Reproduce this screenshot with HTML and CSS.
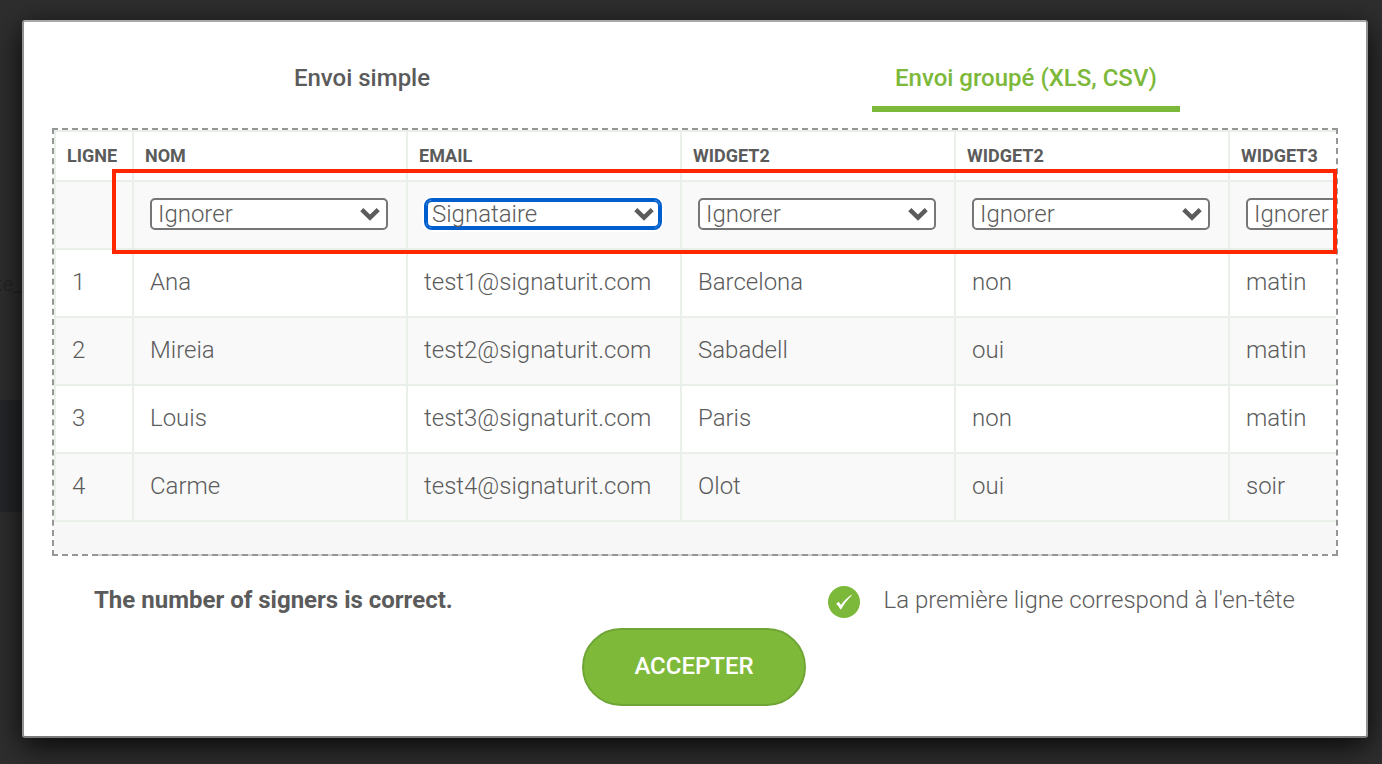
FILE: index.html
```html
<!DOCTYPE html>
<html lang="fr">
<head>
<meta charset="utf-8">
<meta name="viewport" content="width=device-width, initial-scale=1">
<title>Envoi groupé</title>
<link rel="stylesheet" href="styles.css">
</head>
<body>
<div class="page-behind" aria-hidden="true">
  <span class="page-text">te_</span>
  <div class="page-band"></div>
</div>
<svg class="symbols" aria-hidden="true">
  <symbol id="chevron" viewBox="0 0 20 14"><path d="M1.8 2.6 10 10.6 18.2 2.6" fill="none" stroke="#5b5b5b" stroke-width="4.4"/></symbol>
</svg>
<main class="modal" role="dialog" aria-label="Envoi groupé">
  <div class="tabs" role="tablist">
    <button class="tab" role="tab" aria-selected="false">Envoi simple</button>
    <button class="tab tab-active" role="tab" aria-selected="true">Envoi groupé (XLS, CSV)</button>
  </div>
  <section class="preview">
    <div class="scroller">
      <table class="sheet">
        <colgroup><col class="col-line"><col class="col-data"><col class="col-data"><col class="col-data"><col class="col-data"><col class="col-data"></colgroup>
        <thead>
          <tr><th scope="col">LIGNE</th><th scope="col">NOM</th><th scope="col">EMAIL</th><th scope="col">WIDGET2</th><th scope="col">WIDGET2</th><th scope="col">WIDGET3</th></tr>
        </thead>
        <tbody>
          <tr>
            <td></td>
            <td><span class="picker"><select aria-label="Nom"><option>Ignorer</option><option>Signataire</option></select><svg class="chevron"><use href="#chevron"/></svg></span></td>
            <td><span class="picker picker-focus"><select aria-label="Email"><option>Signataire</option><option>Ignorer</option></select><svg class="chevron"><use href="#chevron"/></svg></span></td>
            <td><span class="picker"><select aria-label="Widget2"><option>Ignorer</option><option>Signataire</option></select><svg class="chevron"><use href="#chevron"/></svg></span></td>
            <td><span class="picker"><select aria-label="Widget2"><option>Ignorer</option><option>Signataire</option></select><svg class="chevron"><use href="#chevron"/></svg></span></td>
            <td><span class="picker"><select aria-label="Widget3"><option>Ignorer</option><option>Signataire</option></select><svg class="chevron"><use href="#chevron"/></svg></span></td>
          </tr>
          <tr><td>1</td><td>Ana</td><td>test1@signaturit.com</td><td>Barcelona</td><td>non</td><td>matin</td></tr>
          <tr><td>2</td><td>Mireia</td><td>test2@signaturit.com</td><td>Sabadell</td><td>oui</td><td>matin</td></tr>
          <tr><td>3</td><td>Louis</td><td>test3@signaturit.com</td><td>Paris</td><td>non</td><td>matin</td></tr>
          <tr><td>4</td><td>Carme</td><td>test4@signaturit.com</td><td>Olot</td><td>oui</td><td>soir</td></tr>
        </tbody>
      </table>
    </div>
    <div class="highlight"></div>
  </section>
  <div class="summary">
    <strong class="status">The number of signers is correct.</strong>
    <label class="header-option" for="first-row">
      <span class="tick">
        <input type="checkbox" id="first-row" checked>
        <svg viewBox="0 0 32 32"><path d="M8.1 17.8 10.7 15.7 13 18.9C15.7 15.2 19.2 11.7 23.4 8.8L23.9 9.3C19.7 13.4 16.2 18 13.2 23.2L12.2 23.2C11.2 21.2 9.8 19.3 8.1 17.8Z" fill="#fff"/></svg>
      </span>
      <span>La première ligne correspond à l'en-tête</span>
    </label>
  </div>
  <button class="accept">ACCEPTER</button>
</main>
</body>
</html>
```
FILE: styles.css
```css
* { box-sizing: border-box; }
body {
  margin: 0;
  padding: 20px 14px 26px 22px;
  background: #2e2e2e;
  color: #5b5b5b;
  font: 300 24px/28px Roboto, sans-serif;
  overflow: hidden;
}
button, select { font: inherit; color: inherit; margin: 0; }
.symbols { position: absolute; width: 0; height: 0; }

/* Dimmed page under the dialog */
.page-behind { position: absolute; inset: 0 auto auto 0; width: 40px; padding-top: 270px; }
.page-text { display: block; height: 130px; margin-left: -4px; color: #232425; font-size: 20px; font-weight: 400; }
.page-band { height: 112px; background: #242629; }

.modal {
  position: relative;
  display: flex;
  flex-direction: column;
  padding: 30px 28px;
  background: #fff;
  border: 2px solid;
  border-color: #a8a8a8 #919191 #7a7a7a;
  border-radius: 3px;
  box-shadow: 0 8px 30px rgba(0, 0, 0, .85);
}

.tabs { display: grid; grid-template-columns: 1fr 1fr; justify-items: center; margin: 0 -20px 16px -22px; }
.tab { height: 60px; padding: 0 22px 2px; border: 0; border-bottom: 6px solid transparent; background: none; font-weight: 500; white-space: nowrap; }
.tab-active { width: 308px; color: #7cb83a; border-color: #7cb83a; }

.preview { position: relative; z-index: 1; border: 2px dashed #969696; }
.scroller { overflow: hidden; padding-bottom: 32px; background: #f7f7f7; }
.sheet {
  width: 1450px;
  table-layout: fixed;
  border-collapse: separate;
  border-spacing: 0;
  border: solid #e9f0ea;
  border-width: 2px 0 0 2px;
  background: #fff;
}
.col-line { width: 78px; }
.col-data { width: 274px; }
.sheet th, .sheet td { border: solid #e9f0ea; border-width: 0 2px 2px 0; text-align: left; }
.sheet th { height: 50px; padding: 0 11px; font-size: 18px; line-height: 20px; font-weight: 700; }
.sheet td { height: 68px; padding: 0 18px 2px 16px; }
.sheet tbody tr:nth-child(odd) { background: #f9f9f9; }
.sheet tbody tr:nth-child(even) { background: #fff; }

.picker { display: grid; align-items: center; }
.picker > * { grid-area: 1 / 1; }
.picker select {
  appearance: none;
  width: 100%;
  height: 32px;
  padding: 0 36px 0 6px;
  border: 2px solid #767676;
  border-radius: 5px;
  background: #fff;
}
.picker-focus select { border-color: #005fcc; border-radius: 8px; box-shadow: inset 0 0 0 2px #005fcc, 0 0 0 2px #fff; }
.chevron { justify-self: end; width: 20px; height: 14px; margin-right: 8px; pointer-events: none; }

/* Red frame drawn over the row of column pickers */
.highlight { position: absolute; top: 39px; right: -1px; left: 58px; height: 85px; border: 4px solid #ff2600; pointer-events: none; }

.summary {
  display: flex;
  justify-content: space-between;
  align-items: center;
  margin: -2px 40px 10px 42px;
  padding-top: 30px;
  border-top: 2px solid #d0d0d0;
}
.status { font-weight: 700; padding-bottom: 4px; }
.header-option { display: flex; align-items: center; gap: 24px; padding-right: 3px; }
.header-option > span:last-child { padding-bottom: 4px; }
.tick { display: grid; width: 32px; height: 32px; }
.tick > * { grid-area: 1 / 1; margin: 0; }
.tick input { appearance: none; width: 32px; height: 32px; border-radius: 50%; background: #7cb83a; }
.tick svg { width: 32px; height: 32px; pointer-events: none; }

.accept {
  align-self: center;
  width: 224px;
  height: 78px;
  margin-left: -2px;
  padding: 0 0 2px;
  border: 2px solid #6fa535;
  border-radius: 39px;
  background: #7eb93a;
  color: #fff;
  font-weight: 500;
}
```
